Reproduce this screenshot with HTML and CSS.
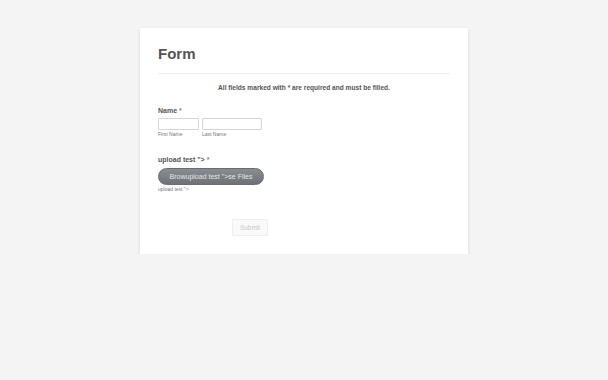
FILE: index.html
```html
<!DOCTYPE html>
<html lang="en">
<head>
  <meta charset="UTF-8">
  <title>Form</title>
  <link rel="stylesheet" href="styles.css">
</head>
<body>
  <main class="form-card">
    <h1 class="form-title">Form</h1>
    <p class="form-note">All fields marked with * are required and must be filled.</p>

    <div class="field">
      <label class="field-label">Name <span class="req">*</span></label>
      <div class="name-row">
        <div class="name-part">
          <input type="text" class="input-first">
          <span class="sublabel">First Name</span>
        </div>
        <div class="name-part">
          <input type="text" class="input-last">
          <span class="sublabel">Last Name</span>
        </div>
      </div>
    </div>

    <div class="field field-upload">
      <label class="field-label">upload test "&gt; <span class="req">*</span></label>
      <button type="button" class="upload-button">Browupload test "&gt;se Files</button>
      <span class="sublabel">upload test "&gt;</span>
    </div>

    <div class="submit-row">
      <button type="button" class="submit-button" disabled>Submit</button>
    </div>
  </main>
</body>
</html>
```

FILE: styles.css
```css
body {
  margin: 0;
  padding: 28px 0 0;
  background-color: #f4f4f4;
  font-family: "Liberation Sans", Arial, sans-serif;
  color: #555;
}
.form-card {
  width: 328px;
  height: 226px;
  margin-left: 140px;
  box-sizing: border-box;
  padding: 17px 18px 0;
  background-color: #fff;
  box-shadow: 0 1px 3px rgba(0, 0, 0, 0.12);
}
.form-title {
  margin: 0;
  padding-bottom: 10px;
  font-size: 15px;
  line-height: 18px;
  font-weight: bold;
  color: #555;
  border-bottom: 1px solid #eee;
}
.form-note {
  margin: 9px 0 0;
  font-size: 6.6px;
  line-height: 9px;
  font-weight: bold;
  text-align: center;
  color: #555;
}
.field {
  margin-top: 14px;
}
.field-label {
  display: block;
  font-size: 7px;
  line-height: 9px;
  font-weight: bold;
  color: #555;
}
.req {
  color: #888;
}
.name-row {
  display: flex;
  gap: 3px;
  margin-top: 3px;
}
.name-part {
  display: flex;
  flex-direction: column;
}
input {
  height: 12px;
  box-sizing: border-box;
  margin: 0;
  padding: 0;
  border: 1px solid #d6d6d6;
  border-radius: 1px;
  background-color: #fff;
}
.input-first {
  width: 41px;
}
.input-last {
  width: 60px;
}
.sublabel {
  display: block;
  margin-top: 1px;
  font-size: 5px;
  line-height: 6px;
  color: #777;
}
.field-upload {
  margin-top: 18px;
}
.upload-button {
  display: block;
  width: 106px;
  height: 17px;
  margin-top: 4px;
  padding: 0;
  border: 1px solid #6a6c73;
  border-radius: 9px;
  background: linear-gradient(#8a8c93, #6f7178);
  color: #e6e6e6;
  font-family: "Liberation Sans", Arial, sans-serif;
  font-size: 7px;
}
.field-upload .sublabel {
  margin-top: 1px;
}
.submit-row {
  margin-top: 24px;
  padding-left: 74px;
}
.submit-button {
  width: 36px;
  height: 17px;
  padding: 0;
  border: 1px solid #eee;
  border-radius: 1px;
  background-color: #fafafa;
  color: #c8c8c8;
  font-family: "Liberation Sans", Arial, sans-serif;
  font-size: 6.5px;
}
```
